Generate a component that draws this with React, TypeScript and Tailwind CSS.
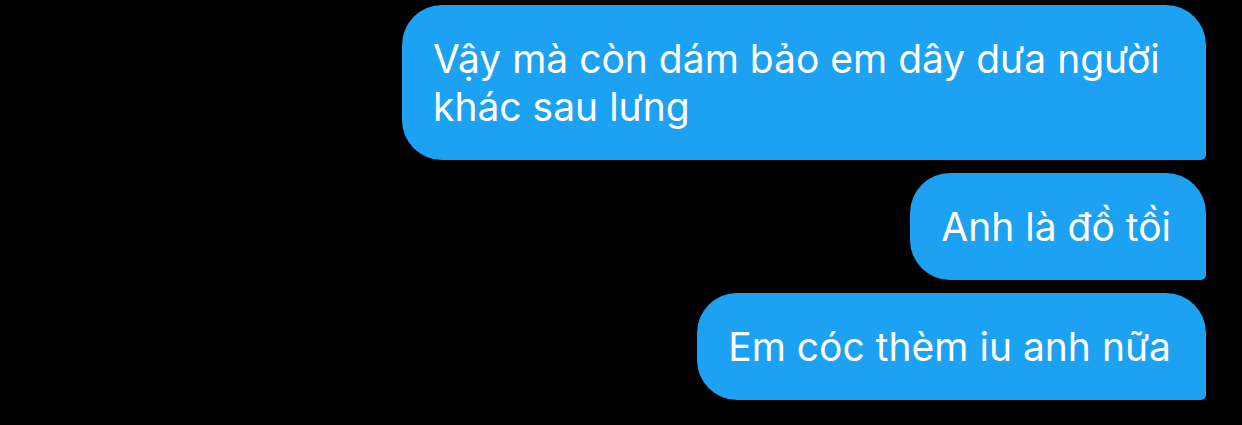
const messages = [
  'Vậy mà còn dám bảo em dây dưa người khác sau lưng',
  'Anh là đồ tồi',
  'Em cóc thèm iu anh nữa',
]

export default function App() {
  return (
    <div
      className="flex h-[425px] w-[1242px] flex-col items-end gap-[13px] overflow-hidden bg-black pr-[36px] pt-[5px]"
      style={{ fontFamily: 'Inter, "Noto Sans", sans-serif' }}
    >
      {messages.map((text) => (
        <div
          key={text}
          className="max-w-[804px] rounded-[40px] rounded-br-[5px] bg-[#1DA1F2] pt-[30px] pb-[29px] pl-[31px] pr-[35px] text-[39px] leading-[48px] text-white"
        >
          {text}
        </div>
      ))}
    </div>
  )
}
